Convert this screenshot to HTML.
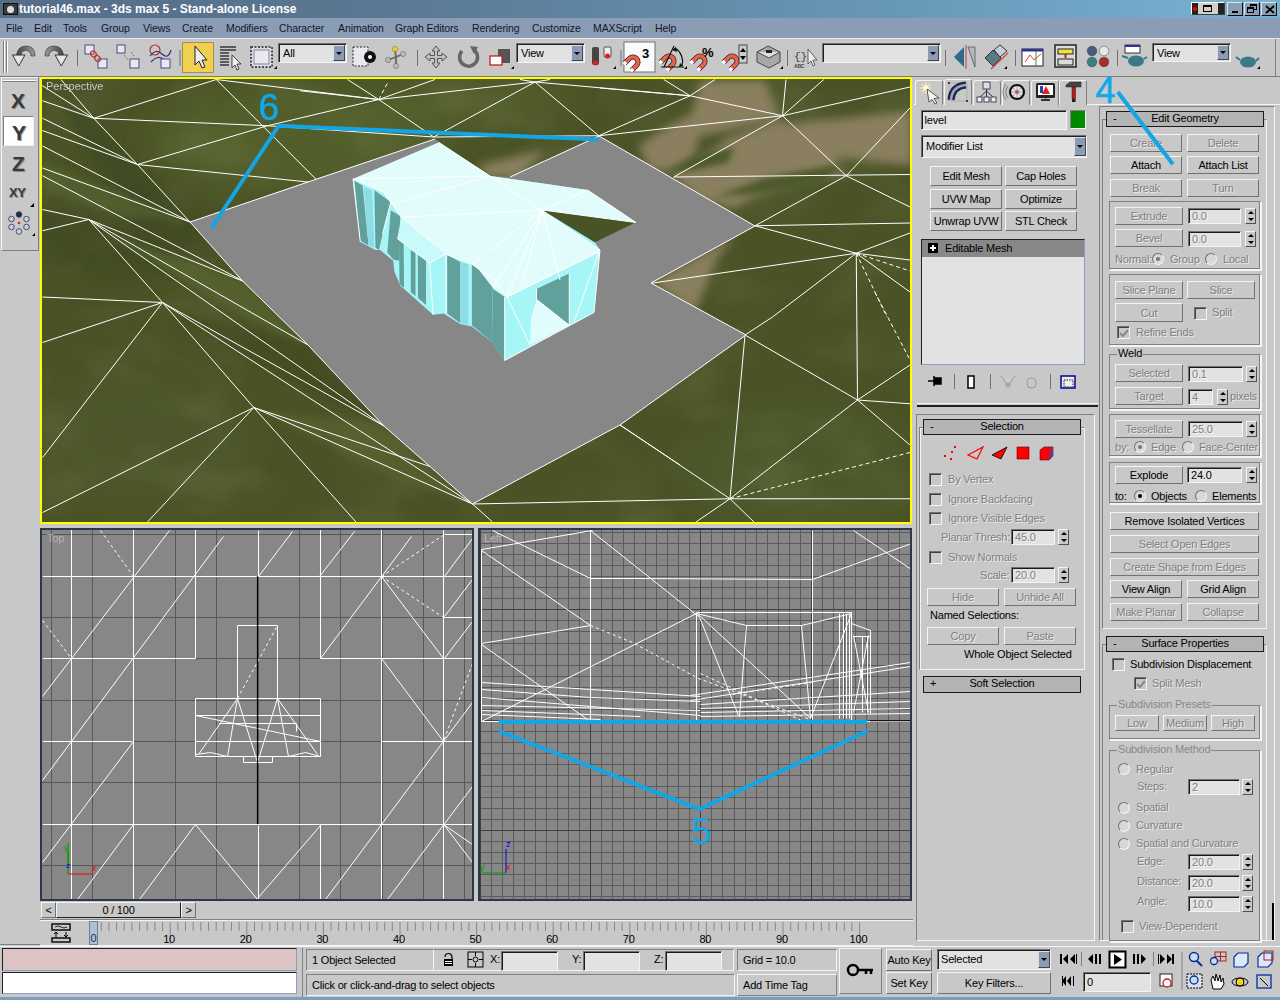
<!DOCTYPE html><html><head><meta charset="utf-8"><style>

*{margin:0;padding:0;box-sizing:border-box}
html,body{width:1280px;height:1000px;overflow:hidden;background:#c8c8c8;font-family:"Liberation Sans",sans-serif;font-size:11px;letter-spacing:-0.2px;color:#000}
.a{position:absolute}
.t{position:absolute;white-space:nowrap;line-height:13px}
.btn{position:absolute;background:#c8c8c8;border:1px solid;border-color:#f4f4f4 #707070 #707070 #f4f4f4;text-align:center;white-space:nowrap;color:#000;display:flex;align-items:center;justify-content:center;line-height:12px}
.dis{color:#808080;text-shadow:1px 1px 0 #ececec}
.fld{position:absolute;background:#e2e2e2;border:1px solid;border-color:#707070 #f4f4f4 #f4f4f4 #707070;box-shadow:inset 1px 1px 0 #1a1a1a;white-space:nowrap;line-height:13px;padding-left:3px;color:#000}
.fld.d{color:#808080;text-shadow:1px 1px 0 #f4f4f4}
.roll{position:absolute;background:#b4b4b4;border:1px solid #1a1a1a;text-align:center;line-height:13px;white-space:nowrap}
.roll b{position:absolute;left:6px;top:0;font-weight:normal}
.grp{position:absolute;border:1px solid;border-color:#808080 #f4f4f4 #f4f4f4 #808080;box-shadow:inset -1px -1px 0 #808080, 1px 1px 0 #f4f4f4}
.cb{position:absolute;width:13px;height:13px;background:#c8c8c8;border:1px solid;border-color:#707070 #f4f4f4 #f4f4f4 #707070;box-shadow:inset 1px 1px 0 #404040}
.rb{position:absolute;width:12px;height:12px;border-radius:50%;background:#d8d8d8;border:1px solid;border-color:#707070 #f4f4f4 #f4f4f4 #707070}
.spn{position:absolute;width:11px;background:#c8c8c8;border:1px solid;border-color:#f4f4f4 #505050 #505050 #f4f4f4}
.spn:before{content:"";position:absolute;left:2px;top:2px;border:3px solid transparent;border-bottom:3px solid #000;border-top:0}
.spn:after{content:"";position:absolute;left:2px;bottom:2px;border:3px solid transparent;border-top:3px solid #000;border-bottom:0}
.sep{position:absolute;width:2px;border-left:1px solid #808080;border-right:1px solid #f4f4f4}

</style></head><body>
<div class="a" style="left:0;top:0;width:1280px;height:18px;background:linear-gradient(90deg,#566d88 0%,#5a7893 30%,#6898b8 70%,#7ab2d2 100%)"></div>
<div class="a" style="left:3px;top:3px;width:15px;height:12px;background:#3a3a3a;border:1px solid #111"><div class="a" style="left:3px;top:2px;width:7px;height:7px;border-radius:50%;background:#ddd"></div></div>
<div class="t" style="left:19px;top:2px;color:#fff;font-weight:bold;font-size:12px;letter-spacing:0;line-height:15px">tutorial46.max - 3ds max 5 - Stand-alone License</div>
<div class="a" style="left:1191px;top:2px;width:34px;height:13px;background:#d4d0c8;border:1px solid;border-color:#fff #404040 #404040 #fff"><div class="a" style="left:0;top:0;width:6px;height:11px;background:#222"></div><div class="a" style="left:1px;top:4px;width:4px;height:4px;background:#f00;border-radius:50%"></div><div class="a" style="left:26px;top:0;width:6px;height:11px;background:#222"></div><div class="a" style="left:11px;top:2px;width:9px;height:7px;border:1px solid #000;border-top-width:2px"></div></div>
<div class="a" style="left:1227px;top:2px;width:16px;height:14px;background:#8a9fb6;border:1px solid;border-color:#dfe6ee #101010 #101010 #dfe6ee"><div class="a" style="left:4px;top:8px;width:6px;height:2px;background:#000"></div></div>
<div class="a" style="left:1244px;top:2px;width:16px;height:14px;background:#8a9fb6;border:1px solid;border-color:#dfe6ee #101010 #101010 #dfe6ee"><div class="a" style="left:5px;top:1px;width:7px;height:6px;border:1px solid #000;border-top-width:2px"></div><div class="a" style="left:2px;top:4px;width:7px;height:6px;border:1px solid #000;border-top-width:2px;background:#8a9fb6"></div></div>
<div class="a" style="left:1261px;top:2px;width:16px;height:14px;background:#8a9fb6;border:1px solid;border-color:#dfe6ee #101010 #101010 #dfe6ee"><svg class="a" style="left:3px;top:2px" width="10" height="9"><path d="M1,1 L9,8 M9,1 L1,8" stroke="#000" stroke-width="1.8"/></svg></div>
<div class="a" style="left:0;top:18px;width:1280px;height:20px;background:#8a9db5"></div>
<div class="a" style="left:0;top:38px;width:1280px;height:1px;background:#e6e6e6"></div>
<div class="t" style="left:6px;top:22px;color:#14142e;font-size:10.5px;letter-spacing:-0.1px">File</div>
<div class="t" style="left:34px;top:22px;color:#14142e;font-size:10.5px;letter-spacing:-0.1px">Edit</div>
<div class="t" style="left:63px;top:22px;color:#14142e;font-size:10.5px;letter-spacing:-0.1px">Tools</div>
<div class="t" style="left:101px;top:22px;color:#14142e;font-size:10.5px;letter-spacing:-0.1px">Group</div>
<div class="t" style="left:143px;top:22px;color:#14142e;font-size:10.5px;letter-spacing:-0.1px">Views</div>
<div class="t" style="left:182px;top:22px;color:#14142e;font-size:10.5px;letter-spacing:-0.1px">Create</div>
<div class="t" style="left:226px;top:22px;color:#14142e;font-size:10.5px;letter-spacing:-0.1px">Modifiers</div>
<div class="t" style="left:279px;top:22px;color:#14142e;font-size:10.5px;letter-spacing:-0.1px">Character</div>
<div class="t" style="left:338px;top:22px;color:#14142e;font-size:10.5px;letter-spacing:-0.1px">Animation</div>
<div class="t" style="left:395px;top:22px;color:#14142e;font-size:10.5px;letter-spacing:-0.1px">Graph Editors</div>
<div class="t" style="left:472px;top:22px;color:#14142e;font-size:10.5px;letter-spacing:-0.1px">Rendering</div>
<div class="t" style="left:532px;top:22px;color:#14142e;font-size:10.5px;letter-spacing:-0.1px">Customize</div>
<div class="t" style="left:593px;top:22px;color:#14142e;font-size:10.5px;letter-spacing:-0.1px">MAXScript</div>
<div class="t" style="left:655px;top:22px;color:#14142e;font-size:10.5px;letter-spacing:-0.1px">Help</div>
<div class="a" style="left:0;top:39px;width:1276px;height:38px;background:#c8c8c8;border-right:1px solid #808080;border-bottom:1px solid #808080"></div>
<div class="a" style="left:0;top:76px;width:1280px;height:1px;background:#7a7a7a"></div>
<div class="a" style="left:3px;top:41px;width:2px;height:32px;border-left:1px solid #808080;border-right:1px solid #fff"></div>
<div class="a" style="left:6px;top:41px;width:2px;height:32px;border-left:1px solid #808080;border-right:1px solid #fff"></div>
<svg class="a" style="left:0;top:38px" width="1280" height="39" viewBox="0 38 1280 39">
<defs>
<linearGradient id="gm" x1="0" y1="0" x2="0" y2="1"><stop offset="0" stop-color="#f4f4f4"/><stop offset="1" stop-color="#707070"/></linearGradient>
<radialGradient id="sph" cx="0.35" cy="0.35" r="0.7"><stop offset="0" stop-color="#fff"/><stop offset="1" stop-color="#555"/></radialGradient>
</defs>
<linearGradient id="ug" x1="0" y1="0" x2="1" y2="0"><stop offset="0" stop-color="#444"/><stop offset="1" stop-color="#9a9a9a"/></linearGradient><path d="M35,56 L31,56 Q30.5,50.5 26,50.5 Q21.5,50.5 21,55 L16.5,55 Q18,46 26,46 Q35,46 35,56 Z" fill="url(#ug)" stroke="#333" stroke-width="0.6"/><path d="M12.5,55 L25,55 L18.7,66 Z" fill="#e6e6e6" stroke="#333" stroke-width="1"/>
<linearGradient id="rg" x1="1" y1="0" x2="0" y2="0"><stop offset="0" stop-color="#444"/><stop offset="1" stop-color="#9a9a9a"/></linearGradient><path d="M45,56 L49,56 Q49.5,50.5 54,50.5 Q58.5,50.5 59,55 L63.5,55 Q62,46 54,46 Q45,46 45,56 Z" fill="url(#rg)" stroke="#333" stroke-width="0.6"/><path d="M67.5,55 L55,55 L61.3,66 Z" fill="#e6e6e6" stroke="#333" stroke-width="1"/>
<line x1="77.5" y1="50" x2="77.5" y2="66" stroke="#707070"/>
<rect x="85" y="45" width="9" height="9" fill="#e8e8f4" stroke="#4a4a80"/><rect x="98" y="59" width="9" height="9" fill="#e8e8f4" stroke="#4a4a80"/><ellipse cx="93.5" cy="54" rx="2.6" ry="3.2" transform="rotate(-40 93.5 54)" fill="none" stroke="#c03030" stroke-width="1.3"/><ellipse cx="97.5" cy="58.5" rx="2.6" ry="3.2" transform="rotate(-40 97.5 58.5)" fill="none" stroke="#c03030" stroke-width="1.3"/>
<rect x="117" y="45" width="8" height="8" fill="#e8e8f4" stroke="#4a4a80"/><rect x="130" y="59" width="9" height="9" fill="#e8e8f4" stroke="#4a4a80"/><path d="M124,55 L128,60 M131,52 L134,56" stroke="#c03030" stroke-width="1" stroke-dasharray="1,1"/>
<circle cx="155" cy="50" r="5" fill="none" stroke="#c03030" stroke-width="1.2"/><path d="M150,56 Q156,48 162,54 T171,50 M151,62 Q158,54 164,60" stroke="#303070" stroke-width="1.2" fill="none"/><rect x="161" y="59" width="9" height="9" fill="#e8e8f4" stroke="#4a4a80"/>
<line x1="180" y1="50" x2="180" y2="66" stroke="#707070"/>
<rect x="182.5" y="42.5" width="31" height="30" fill="#f0d050" stroke="#a89040" stroke-width="1"/>
<path d="M195,46 L195,65 L199,61 L202,68 L205,67 L202,60 L207,60 Z" fill="#eee" stroke="#222" stroke-width="1"/>
<g stroke="#111" stroke-width="1.2"><line x1="220" y1="47" x2="236" y2="47"/><line x1="220" y1="50" x2="236" y2="50"/><line x1="220" y1="53" x2="229" y2="53"/><line x1="220" y1="56" x2="229" y2="56"/><line x1="220" y1="59" x2="229" y2="59"/><line x1="220" y1="62" x2="229" y2="62"/><line x1="220" y1="65" x2="229" y2="65"/></g>
<path d="M232,55 L232,68 L235,65 L237,70 L239,69 L237,64 L241,64 Z" fill="#eee" stroke="#222" stroke-width="0.8"/>
<rect x="251" y="47" width="21" height="20" fill="#dcdcec" stroke="#222" stroke-width="1.5" stroke-dasharray="2,1.5"/><rect x="254" y="50" width="15" height="14" fill="#e8e8f0" stroke="#888"/>
<rect x="353" y="47" width="15" height="19" fill="#e8e8f0" stroke="#222" stroke-dasharray="2,1.5"/><circle cx="370" cy="57" r="6" fill="#111"/><circle cx="370" cy="57" r="2" fill="#fff"/>
<g stroke="#666" stroke-width="1.8"><line x1="396" y1="57" x2="395" y2="50"/><line x1="396" y1="57" x2="388" y2="60"/><line x1="396" y1="57" x2="403" y2="54"/><line x1="396" y1="57" x2="396" y2="65"/></g><circle cx="395" cy="49" r="2.6" fill="#f0d030" stroke="#806010" stroke-width="0.5"/><circle cx="388" cy="60" r="2.6" fill="#bbb" stroke="#555" stroke-width="0.5"/><circle cx="403" cy="54" r="2.6" fill="#bbb" stroke="#555" stroke-width="0.5"/><circle cx="396" cy="66" r="2.6" fill="#bbb" stroke="#555" stroke-width="0.5"/>
<line x1="417.5" y1="50" x2="417.5" y2="66" stroke="#707070"/>
<path d="M436,46 L440,51 L437.5,51 L437.5,55.5 L442,55.5 L442,53 L447,57 L442,61 L442,58.5 L437.5,58.5 L437.5,63 L440,63 L436,68 L432,63 L434.5,63 L434.5,58.5 L430,58.5 L430,61 L425,57 L430,53 L430,55.5 L434.5,55.5 L434.5,51 L432,51 Z" fill="#c0c0c0" stroke="#555" stroke-width="1"/>
<path d="M462,51 A9,9 0 1 0 474,50" fill="none" stroke="#666" stroke-width="3.5"/><path d="M470,46 L478,47 L474,54 Z" fill="#666"/>
<rect x="498" y="49" width="12" height="14" fill="#555"/><rect x="490" y="56" width="12" height="9" fill="#fff" stroke="#c02020" stroke-width="1.3"/>
<rect x="592" y="47" width="7" height="18" fill="#444" rx="2"/><rect x="604" y="47" width="7" height="10" fill="#eee" stroke="#555" rx="1"/><circle cx="595.5" cy="63" r="2.5" fill="#e02020"/><circle cx="607.5" cy="56" r="2.5" fill="#e02020"/>
<line x1="621" y1="50" x2="621" y2="66" stroke="#707070"/>
<rect x="624" y="42" width="31" height="30" fill="#fafafa" stroke="#707070"/>
<g transform="translate(633,62) rotate(45)"><path d="M-5,7 L-5,0 A5,5 0 0 1 5,0 L5,7" fill="none" stroke="#303030" stroke-width="5.2"/><path d="M-5,7 L-5,0 A5,5 0 0 1 5,0 L5,7" fill="none" stroke="#f06048" stroke-width="3.6"/><path d="M-5,5 L-5,8 M5,5 L5,8" stroke="#fff" stroke-width="3.6"/></g><text x="642" y="58" font-size="13" font-weight="bold" font-family="Liberation Sans" fill="#000">3</text>
<g transform="translate(669,61) rotate(45)"><path d="M-5,7 L-5,0 A5,5 0 0 1 5,0 L5,7" fill="none" stroke="#303030" stroke-width="5.2"/><path d="M-5,7 L-5,0 A5,5 0 0 1 5,0 L5,7" fill="none" stroke="#f06048" stroke-width="3.6"/><path d="M-5,5 L-5,8 M5,5 L5,8" stroke="#fff" stroke-width="3.6"/></g><g transform="translate(700,61) rotate(45)"><path d="M-5,7 L-5,0 A5,5 0 0 1 5,0 L5,7" fill="none" stroke="#303030" stroke-width="5.2"/><path d="M-5,7 L-5,0 A5,5 0 0 1 5,0 L5,7" fill="none" stroke="#f06048" stroke-width="3.6"/><path d="M-5,5 L-5,8 M5,5 L5,8" stroke="#fff" stroke-width="3.6"/></g><g transform="translate(732,61) rotate(45)"><path d="M-5,7 L-5,0 A5,5 0 0 1 5,0 L5,7" fill="none" stroke="#303030" stroke-width="5.2"/><path d="M-5,7 L-5,0 A5,5 0 0 1 5,0 L5,7" fill="none" stroke="#f06048" stroke-width="3.6"/><path d="M-5,5 L-5,8 M5,5 L5,8" stroke="#fff" stroke-width="3.6"/></g>
<path d="M661,67 L684,67 M664,67 L674,46 M675,48 A16,16 0 0 1 682,66" fill="none" stroke="#111" stroke-width="1.2"/><path d="M672,50 L676,47 L677,52 Z M680,63 L683,66 L679,67 Z" fill="#111"/>
<text x="702" y="57" font-size="13" font-weight="bold" font-family="Liberation Sans" fill="#000">%</text>
<rect x="739" y="45" width="8" height="18" fill="#ccc" stroke="#444"/><path d="M740,52 L743,48 L746,52 Z M740,56 L743,60 L746,56 Z" fill="#000"/>
<path d="M757,52 L768,46 L780,52 L780,62 L769,68 L757,62 Z" fill="#a8a8a8" stroke="#444"/><path d="M757,52 L769,58 L780,52" fill="#ddd" stroke="#444"/><rect x="766" y="50" width="6" height="3" fill="#222"/>
<line x1="787.5" y1="50" x2="787.5" y2="66" stroke="#707070"/>
<text x="794" y="60" font-size="11" font-family="Liberation Mono" fill="#444">{}</text><text x="794" y="68" font-size="5" font-weight="bold" font-family="Liberation Sans" fill="#444">ABC</text><path d="M808,49 L808,64 L811,61 L813,66 L815,65 L813,60 L817,60 Z" fill="#eee" stroke="#444" stroke-width="0.8"/>
<line x1="945.5" y1="50" x2="945.5" y2="66" stroke="#707070"/>
<path d="M964,47 L954,57 L964,67 Z" fill="#2e6a8a"/><line x1="966" y1="45" x2="966" y2="69" stroke="#c04040" stroke-width="1"/><path d="M968,47 L975,67 L975,47 Z" fill="#b8b8c0" stroke="#555" stroke-width="0.8"/>
<path d="M985,58 L993,50 L1001,58 L993,66 Z" fill="#5a7a88" stroke="#333"/><path d="M994,50 L1000,45 L1007,51 L1000,57 Z" fill="#c8d0e0" stroke="#333"/><line x1="991" y1="69" x2="1008" y2="53" stroke="#e04040" stroke-width="1.2"/>
<line x1="1015.5" y1="50" x2="1015.5" y2="66" stroke="#707070"/>
<rect x="1022" y="49" width="21" height="17" fill="#fff" stroke="#222"/><rect x="1022" y="49" width="21" height="2.5" fill="#3030a0"/><path d="M1025,62 L1030,55 L1034,60 L1041,54" stroke="#e04040" fill="none"/><line x1="1036" y1="51" x2="1036" y2="66" stroke="#30a030"/>
<rect x="1055" y="45" width="21" height="22" fill="#ddd" stroke="#222" stroke-width="1.5"/><rect x="1058" y="49" width="15" height="5" fill="#f0e040" stroke="#222"/><rect x="1058" y="59" width="15" height="6" fill="#ddd" stroke="#222"/><path d="M1065.5,54 L1065.5,58" stroke="#c02020" stroke-width="2"/>
<circle cx="1092" cy="51" r="4.8" fill="#4a5a80" stroke="#222" stroke-width="0.4"/>
<circle cx="1104" cy="51" r="4.8" fill="#e8e8e8" stroke="#222" stroke-width="0.4"/>
<circle cx="1092" cy="62" r="4.8" fill="#3a8080" stroke="#222" stroke-width="0.4"/>
<circle cx="1104" cy="62" r="4.8" fill="#a03030" stroke="#222" stroke-width="0.4"/>
<line x1="1117.5" y1="50" x2="1117.5" y2="66" stroke="#707070"/>
<rect x="1125" y="45" width="15" height="8" fill="#fff" stroke="#333"/><rect x="1125" y="45" width="15" height="2" fill="#3030a0"/><ellipse cx="1136" cy="61" rx="8" ry="5.5" fill="#3a7a88"/><path d="M1128,58 L1122,56 M1144,59 L1147,57" stroke="#3a7a88" stroke-width="2"/>
<ellipse cx="1248" cy="62" rx="8" ry="5.5" fill="#3a7a88"/><path d="M1240,60 L1236,57 M1256,61 L1259,58" stroke="#3a7a88" stroke-width="2"/>
<path d="M511,69 L514,66 L514,69 Z" fill="#000"/><path d="M613,69 L616,66 L616,69 Z" fill="#000"/><path d="M684,69 L687,66 L687,69 Z" fill="#000"/><path d="M780,69 L783,66 L783,69 Z" fill="#000"/><path d="M1004,69 L1007,66 L1007,69 Z" fill="#000"/><path d="M1257,69 L1260,66 L1260,69 Z" fill="#000"/><path d="M274,69 L277,66 L277,69 Z" fill="#000"/>
</svg>
<div class="a" style="left:278px;top:43px;width:69px;height:20px;background:#e2e2e2;border:1px solid;border-color:#707070 #f4f4f4 #f4f4f4 #707070;box-shadow:inset 1px 1px 0 #202020"><div class="t" style="left:4px;top:3px">All</div><div class="a" style="right:1px;top:1px;width:12px;height:16px;background:#8a9cb4;border:1px solid;border-color:#dde #445 #445 #dde"><div class="a" style="left:2px;top:6px;border:3px solid transparent;border-top:3px solid #000;border-bottom:0"></div></div></div>
<div class="a" style="left:516px;top:43px;width:69px;height:20px;background:#e2e2e2;border:1px solid;border-color:#707070 #f4f4f4 #f4f4f4 #707070;box-shadow:inset 1px 1px 0 #202020"><div class="t" style="left:4px;top:3px">View</div><div class="a" style="right:1px;top:1px;width:12px;height:16px;background:#8a9cb4;border:1px solid;border-color:#dde #445 #445 #dde"><div class="a" style="left:2px;top:6px;border:3px solid transparent;border-top:3px solid #000;border-bottom:0"></div></div></div>
<div class="a" style="left:822px;top:43px;width:119px;height:20px;background:#e2e2e2;border:1px solid;border-color:#707070 #f4f4f4 #f4f4f4 #707070;box-shadow:inset 1px 1px 0 #202020"><div class="t" style="left:4px;top:3px"></div><div class="a" style="right:1px;top:1px;width:12px;height:16px;background:#8a9cb4;border:1px solid;border-color:#dde #445 #445 #dde"><div class="a" style="left:2px;top:6px;border:3px solid transparent;border-top:3px solid #000;border-bottom:0"></div></div></div>
<div class="a" style="left:1152px;top:43px;width:79px;height:19px;background:#e2e2e2;border:1px solid;border-color:#707070 #f4f4f4 #f4f4f4 #707070;box-shadow:inset 1px 1px 0 #202020"><div class="t" style="left:4px;top:3px">View</div><div class="a" style="right:1px;top:1px;width:12px;height:15px;background:#8a9cb4;border:1px solid;border-color:#dde #445 #445 #dde"><div class="a" style="left:2px;top:5px;border:3px solid transparent;border-top:3px solid #000;border-bottom:0"></div></div></div>
<div class="a" style="left:1px;top:77px;width:38px;height:174px;border:1px solid;border-color:#f4f4f4 #808080 #808080 #f4f4f4"></div>
<div class="a" style="left:3px;top:80px;width:33px;height:2px;border-top:1px solid #fff;border-bottom:1px solid #808080"></div>
<div class="a" style="left:3px;top:116px;width:31px;height:30px;background:#fdfdfd;border:1px solid;border-color:#808080 #f0f0f0 #f0f0f0 #808080"></div>
<div class="t" style="left:11px;top:90px;font-weight:bold;font-size:21px;line-height:21px;color:#3a3a3a;letter-spacing:0;text-shadow:1px 1px 0 #888">X</div>
<div class="t" style="left:12px;top:122px;font-weight:bold;font-size:21px;line-height:21px;color:#3a3a3a;letter-spacing:0;text-shadow:1px 1px 0 #888">Y</div>
<div class="t" style="left:12px;top:153px;font-weight:bold;font-size:21px;line-height:21px;color:#3a3a3a;letter-spacing:0;text-shadow:1px 1px 0 #888">Z</div>
<div class="t" style="left:9px;top:186px;font-weight:bold;font-size:13px;line-height:13px;color:#3a3a3a;letter-spacing:-0.5px;text-shadow:1px 1px 0 #888">XY</div>
<svg class="a" style="left:7px;top:211px" width="30" height="30"><g stroke="#334" stroke-width="0.8"><circle cx="12" cy="3.5" r="2.8" fill="#1a3040"/><circle cx="4.5" cy="8" r="2.8" fill="#c0d0e8"/><circle cx="19.5" cy="8" r="2.8" fill="#c0d0e8"/><circle cx="4.5" cy="16" r="2.8" fill="#c0d0e8"/><circle cx="19.5" cy="16" r="2.8" fill="#c0d0e8"/><circle cx="12" cy="20.5" r="2.8" fill="#c0d0e8"/></g><circle cx="12" cy="12" r="1.3" fill="#e02020"/><path d="M25,25 L28,22 L28,25 Z" fill="#000"/></svg>
<svg class="a" style="left:30px;top:203px" width="5" height="5"><path d="M0,4 L4,0 L4,4 Z" fill="#000"/></svg>
<svg class="a" style="left:40px;top:77px" width="872" height="447" viewBox="40 77 872 447">
<defs>
<filter id="blur6" x="-20%" y="-20%" width="140%" height="140%"><feGaussianBlur stdDeviation="7"/></filter>
<filter id="blur3" x="-20%" y="-20%" width="140%" height="140%"><feGaussianBlur stdDeviation="3"/></filter>
<filter id="blur12" x="-30%" y="-30%" width="160%" height="160%"><feGaussianBlur stdDeviation="14"/></filter>
<filter id="mottleL" x="0" y="0" width="100%" height="100%"><feTurbulence type="fractalNoise" baseFrequency="0.008 0.016" numOctaves="2" seed="7"/><feColorMatrix type="matrix" values="0 0 0 0 0.35  0 0 0 0 0.39  0 0 0 0 0.19  1.6 0 0 0 -0.72"/><feGaussianBlur stdDeviation="3"/></filter>
<filter id="mottleD" x="0" y="0" width="100%" height="100%"><feTurbulence type="fractalNoise" baseFrequency="0.012 0.022" numOctaves="3" seed="19"/><feColorMatrix type="matrix" values="0 0 0 0 0.24  0 0 0 0 0.27  0 0 0 0 0.12  1.6 0 0 0 -0.75"/><feGaussianBlur stdDeviation="3"/></filter>
<filter id="blur5" x="-20%" y="-20%" width="140%" height="140%"><feGaussianBlur stdDeviation="5"/></filter>
</defs>
<rect x="40" y="77" width="872" height="447" fill="#4a5326"/>
<g filter="url(#blur12)">
<ellipse cx="150" cy="440" rx="100" ry="60" fill="#4d5729"/>
<ellipse cx="300" cy="140" rx="150" ry="50" fill="#535e2c"/><ellipse cx="480" cy="100" rx="90" ry="25" fill="#525d2c"/>
<ellipse cx="800" cy="470" rx="110" ry="60" fill="#4d5829"/>
<ellipse cx="120" cy="230" rx="90" ry="50" fill="#434c22"/>
</g>
<rect x="40" y="77" width="872" height="447" filter="url(#mottleD)" opacity="0.35"/>
<g filter="url(#blur5)" fill="#8a7f5e">
<polygon points="700.7,80 765,80 771,95.4 780.3,116.8 734.4,129 691.5,138.3 654.8,150.5 636.4,147.4 657.8,132.1 691.5,113.8"/>
<polygon points="673,178 728,138 780,120 826,138 844.6,175 795.7,181 749.7,199.5 734.4,208.7 700,200"/>
<polygon points="795.7,123 912,110.7 912,165.8 857,159.7 820,156.6 801.8,144.4"/>
<polygon points="651.7,282 734.4,236 716,260.8 703.8,291.4 694.6,312.8 673,297.5"/>
<polygon points="640,150 700,135 690,175 650,170"/>
<polygon points="478,165 545,150 520,178 488,178"/>
</g>
<g filter="url(#blur3)" fill="#4e5829">
<polygon points="664,172 691.5,156.6 734.4,147.4 728,162.8 685.4,172"/>
<polygon points="716,196.5 765,178 844.6,162.8 826,181 765,193.4"/>
</g>
<g filter="url(#blur3)">
<polygon points="60,100 93,118 190,222 150,210 90,160" fill="#3f4821" opacity="0.7"/>
<polygon points="100,230 243,281.5 308,345 250,320 150,260" fill="#5c6833" opacity="0.6"/>
<polygon points="170,310 308,345 384,426 330,400 230,350" fill="#404a22" opacity="0.6"/>
<polygon points="260,410 384,426 472.5,504 400,480" fill="#5a6632" opacity="0.6"/>
<polygon points="42,160 190,222 120,215 42,190" fill="#5a6632" opacity="0.5"/>
</g>
<g fill="none" stroke="#ffffff" stroke-width="1"><polyline points="61,79.5 93.75,118.25 137.5,164.5 190,222" /><polyline points="42.5,100.75 93.75,118.25" /><polyline points="42.3,130.5 137.5,164.5" /><polyline points="42.3,85.7 93.75,118.25" /><polyline points="93.75,118.25 216.25,79.5" /><polyline points="93.75,118.25 267.5,125.75" /><polyline points="42.5,118.25 137.5,164.5" /><polyline points="42.5,146 190,222" /><polyline points="42.5,168 190,222" /><polyline points="42.5,175.75 245,282" /><polyline points="42.5,209.5 88.75,219.5" /><polyline points="42.5,230.75 88.75,219.5" /><polyline points="137.5,164.5 267.5,125.75" /><polyline points="137.5,164.5 320,183.25" /><polyline points="216.25,79.5 320,183.25" /><polyline points="267.5,125.75 378.75,99.5" /><polyline points="216.25,79.5 378.75,99.5" /><polyline points="88.75,219.5 245,282" /><polyline points="88.75,219.5 162.5,302.5" /><polyline points="42.5,297 162.5,302.5" /><polyline points="42.5,342.5 162.5,302.5" /><polyline points="42.5,457.5 162.5,302.5" /><polyline points="162.5,302.5 253.75,407.5" /><polyline points="253.75,407.5 42.5,512.5" /><polyline points="253.75,407.5 147.5,522" /><polyline points="253.75,407.5 356,522" /><polyline points="88.75,219.5 308,345" /><polyline points="88.75,219.5 384,426" /><polyline points="162.5,302.5 384,426" /><polyline points="162.5,302.5 472.5,504" /><polyline points="253.75,407.5 472.5,504" /><polyline points="253.75,407.5 430,466.5" /><polyline points="472.5,504 492.5,522" /><polyline points="472.5,504 730,498.75" /><polyline points="378.75,99.5 433.75,137" /><polyline points="378.75,99.5 535,82" /><polyline points="378.75,99.5 435,79.5" /><polyline points="347.5,79.5 378.75,99.5" /><polyline points="300,90.75 378.75,99.5" /><polyline points="267.5,125.75 433.75,137" /><polyline points="535,82 598.75,135.75" /><polyline points="535,82 433.75,137" /><polyline points="535,82 690,95.75" /><polyline points="520,79.5 535,82 550,79.5" /><polyline points="433.75,137 598.75,135.75" /><polyline points="600,88 690,95.75" /><polyline points="663.75,79.5 690,95.75" /><polyline points="715,79.5 690,95.75" /><polyline points="690,95.75 598.75,135.75" /><polyline points="690,95.75 782.5,115.75" /><polyline points="598.75,135.75 782.5,115.75" /><polyline points="782.5,115.75 786,79.5" /><polyline points="782.5,115.75 823.75,79.5" /><polyline points="782.5,115.75 910,87" /><polyline points="782.5,115.75 673.75,177" /><polyline points="782.5,115.75 846.25,175.75" /><polyline points="673.75,177 910,174.5" /><polyline points="846.25,175.75 910,108" /><polyline points="846.25,175.75 910,207" /><polyline points="846.25,175.75 755,225.75" /><polyline points="755,225.75 910,223" /><polyline points="755,225.75 856.25,253.25" /><polyline points="651.25,283.25 856.25,253.25" /><polyline points="856.25,253.25 910,233" /><polyline points="856.25,253.25 910,260" /><polyline points="856.25,253.25 910,292" /><polyline points="856.25,253.25 857.5,400" /><polyline points="856.25,253.25 772.5,317" /><polyline points="772.5,317 745,335" /><polyline points="745,335 857.5,400" /><polyline points="745,335 730,498.75" /><polyline points="857.5,400 910,365" /><polyline points="857.5,400 910,403.75" /><polyline points="857.5,400 910,445" /><polyline points="857.5,400 730,498.75" /><polyline points="620,425 730,498.75" /><polyline points="620,425 680,465" /><polyline points="730,498.75 910,498.75" /><polyline points="730,498.75 696,522" /><polyline points="730,498.75 754,522" /></g>
<g fill="none" stroke="#ffffff" stroke-width="1" stroke-dasharray="4,3"><polyline points="856.25,253.25 910,271" /><polyline points="856.25,253.25 887,317" /><polyline points="875,292.5 910,360" /><polyline points="730,498.75 910,452.5" /><polyline points="378.75,99.5 388,82" /></g>
<polygon points="190,222 435,139 490,176 510,177 599,136 755,226 651,283 746,335 620,425 472.5,504 384,426 308,345 243,281.5" fill="#878787"/>
<g fill="none" stroke="#ffffff" stroke-width="1"><polyline points="190,222 435,139"/><polyline points="510,177 599,136 755,226 651,283 746,335 620,425 472.5,504"/><polyline points="190,222 243,281.5 308,345 384,426 472.5,504"/></g>
<polygon points="353,179 438.75,142.5 490,176 587.5,190 636,222.5 595,242.5 600,250 594,312.4 504.7,360.5 491.8,341.7 471.9,326.5 460.1,324.1 443.7,313.5 433.1,314.7 400.2,285.4 394.3,271.3 393.2,260.7 380.2,250.1 375.5,250.1 360.3,241.9" fill="#a6f6f8"/>
<polygon points="354.4,180.8 362.6,185.5 368.5,245.4 360.3,240.7" fill="#62a09c"/>
<polygon points="374.4,190.2 390.8,202 382.6,233.7 379,250.1 375.5,247.8" fill="#62a09c"/>
<polygon points="390.8,210.2 400.2,216 399,260.7 393.2,259.5 387.3,252.5" fill="#62a09c"/>
<polygon points="399,240.7 403.7,243 404,287.7 399.5,284" fill="#62a09c"/>
<polygon points="410.8,250 415.5,253 415.5,296 410.8,292" fill="#62a09c"/>
<polygon points="417.8,254.8 426,260 426,305 418,298" fill="#62a09c"/>
<polygon points="447.2,254.8 460.1,261.9 460.1,322.9 447.2,313.5" fill="#62a09c"/>
<polygon points="471.9,264.2 493,278.3 491.8,341.7 471.9,325.3" fill="#62a09c"/>
<polygon points="493,288.9 504.7,297 504.7,360.5 491.8,341.7" fill="#62a09c"/>
<polygon points="536.5,288.9 569.3,273.6 569.3,325.3 536.5,299.4" fill="#62a09c"/>
<polygon points="363.8,186.7 372,190.2 374.4,247.8 368.5,245.4" fill="#8edce4"/>
<polygon points="460,262 468.3,264.2 468.3,325.3 460,323" fill="#8edce4"/>
<polygon points="536.5,299.4 569.3,325.3 530,345 531,318" fill="#e0fcfc"/>
<polygon points="401.4,217.2 446,253.6 429.6,263 397.2,238.4" fill="#c8fafa"/>
<polygon points="353,179 438.75,142.5 490,176 587.5,190 636,222.5 542.5,210 600,250 507,297 493,288 479,270 471.9,264.2 447.2,254.8 401.4,217.2 392,204 383,192" fill="#e2fcfc"/>
<polygon points="542.5,210 636,222.5 595,242.5" fill="#4a5326"/>
<g stroke="#ffffff" stroke-width="1" fill="none"><line x1="353" y1="179" x2="490" y2="176"/><line x1="392" y1="204" x2="490" y2="176"/><line x1="401.4" y1="217.2" x2="542.5" y2="210"/><line x1="471.9" y1="264.2" x2="542.5" y2="210"/><line x1="507" y1="297" x2="542.5" y2="210"/><line x1="493" y1="288" x2="542.5" y2="210"/><line x1="542.5" y1="210" x2="587.5" y2="190"/><line x1="490" y1="176" x2="600" y2="250"/><line x1="438.75" y1="142.5" x2="490" y2="176"/><line x1="353" y1="179" x2="383" y2="192"/><line x1="383" y1="192" x2="392" y2="204"/><line x1="392" y1="204" x2="401.4" y2="217.2"/><line x1="401.4" y1="217.2" x2="447.2" y2="254.8"/><line x1="447.2" y1="254.8" x2="471.9" y2="264.2"/><line x1="471.9" y1="264.2" x2="493" y2="278.3"/><line x1="493" y1="278.3" x2="507" y2="297"/><line x1="507" y1="297" x2="600" y2="250"/><line x1="600" y1="250" x2="594" y2="312.4"/><line x1="594" y1="312.4" x2="504.7" y2="360.5"/><line x1="504.7" y1="297" x2="504.7" y2="360.5"/><line x1="542.5" y1="210" x2="636" y2="222.5"/><line x1="587.5" y1="190" x2="636" y2="222.5"/><line x1="507" y1="297" x2="530" y2="345"/><line x1="569.3" y1="273.6" x2="569.3" y2="325.3"/><line x1="599" y1="252" x2="574" y2="322"/><line x1="353" y1="179" x2="360.3" y2="241.9"/><line x1="397.2" y1="238.4" x2="429.6" y2="263"/><line x1="429.6" y1="263" x2="446" y2="253.6"/><line x1="520" y1="292" x2="542.5" y2="210"/><line x1="560" y1="280" x2="542.5" y2="210"/><line x1="507" y1="297" x2="599" y2="252"/><line x1="536.5" y1="288.9" x2="536.5" y2="299.4"/><line x1="536.5" y1="299.4" x2="569.3" y2="325.3"/><line x1="429.6" y1="263" x2="433.1" y2="314.7"/><line x1="446" y1="254" x2="446" y2="313.5"/><line x1="382.6" y1="233.7" x2="390.8" y2="202"/></g>
<polyline points="211.25,228.25 278.75,125.75 598.75,139.5" fill="none" stroke="#14a5e6" stroke-width="4" stroke-linejoin="miter"/>
<text x="258.5" y="119.5" font-family="Liberation Sans" font-size="37" fill="#10a8ea" stroke="#10a8ea" stroke-width="0.5" letter-spacing="0">6</text>
<text x="46" y="90" font-family="Liberation Sans" font-size="11" fill="#c8c8c8" letter-spacing="0">Perspective</text>
<rect x="41" y="78" width="870" height="445" fill="none" stroke="#ffff00" stroke-width="2"/>
</svg>
<svg class="a" style="left:40px;top:528px" width="434" height="373" viewBox="40 528 434 373">
<rect x="40" y="528" width="434" height="373" fill="#878787"/>
<g stroke="#575757" stroke-width="1"><line x1="51.5" y1="528" x2="51.5" y2="901"/><line x1="92.5" y1="528" x2="92.5" y2="901"/><line x1="133.5" y1="528" x2="133.5" y2="901"/><line x1="175.5" y1="528" x2="175.5" y2="901"/><line x1="216.5" y1="528" x2="216.5" y2="901"/><line x1="258.5" y1="528" x2="258.5" y2="901"/><line x1="299.5" y1="528" x2="299.5" y2="901"/><line x1="340.5" y1="528" x2="340.5" y2="901"/><line x1="382.5" y1="528" x2="382.5" y2="901"/><line x1="423.5" y1="528" x2="423.5" y2="901"/><line x1="464.5" y1="528" x2="464.5" y2="901"/><line x1="40" y1="534.5" x2="474" y2="534.5"/><line x1="40" y1="576.5" x2="474" y2="576.5"/><line x1="40" y1="617.5" x2="474" y2="617.5"/><line x1="40" y1="658.5" x2="474" y2="658.5"/><line x1="40" y1="700.5" x2="474" y2="700.5"/><line x1="40" y1="741.5" x2="474" y2="741.5"/><line x1="40" y1="782.5" x2="474" y2="782.5"/><line x1="40" y1="824.5" x2="474" y2="824.5"/><line x1="40" y1="865.5" x2="474" y2="865.5"/></g>
<g stroke="#ffffff" stroke-width="1" fill="none"><polyline points="42.5,576.5 472.5,576.5"/><polyline points="42.5,658.5 195.5,658.5"/><polyline points="320.5,658.5 472.5,658.5"/><polyline points="42.5,741.5 132.5,741.5"/><polyline points="381.5,741.5 472.5,741.5"/><polyline points="42.5,824.5 472.5,824.5"/><polyline points="71.5,528.5 71.5,899.5"/><polyline points="133.5,528.5 133.5,899.5"/><polyline points="195.5,528.5 195.5,658.5"/><polyline points="320.5,528.5 320.5,658.5"/><polyline points="320.5,824.5 320.5,899.5"/><polyline points="381.5,528.5 381.5,899.5"/><polyline points="443.5,528.5 443.5,899.5"/><polyline points="42.5,696.5 169.5,530.5"/><polyline points="42.5,780.5 223.5,536.5"/><polyline points="42.5,862.5 133.5,741.5"/><polyline points="77.5,899.5 133.5,824.5"/><polyline points="139.5,899.5 195.5,824.5"/><polyline points="320.5,658.5 411.5,536.5"/><polyline points="444.5,658.5 472.5,621.5"/><polyline points="381.5,824.5 472.5,702.5"/><polyline points="325.5,899.5 381.5,824.5"/><polyline points="387.5,899.5 472.5,786.5"/><polyline points="381.5,658.5 443.5,741.5"/><polyline points="381.5,576.5 443.5,658.5"/><polyline points="195.5,824.5 257.5,899.5"/><polyline points="443.5,824.5 472.5,844.5"/><polyline points="444.5,534.5 472.5,534.5"/><polyline points="444.5,576.5 472.5,538.5"/><polyline points="444.5,616.5 472.5,579.5"/><polyline points="258.5,530.5 258.5,576.5"/><polyline points="258.5,825.5 258.5,901.5"/><polyline points="257.5,898.5 320.5,825.5"/><polyline points="444.5,825.5 472.5,862.5"/><polyline points="258.5,576.5 292.5,531.5"/><polyline points="319.5,576.5 354.5,531.5"/><polyline points="443.5,617.5 472.5,617.5"/><polyline points="237.5,625.5 277.5,625.5 277.5,698.5 237.5,698.5 237.5,625.5"/><polyline points="195.5,698.5 320.5,698.5 320.5,756.5 195.5,756.5 195.5,698.5"/><polyline points="195.5,715.5 320.5,741.5"/><polyline points="195.5,715.5 320.5,715.5"/><polyline points="195.5,741.5 320.5,741.5"/><polyline points="219.5,723.5 296.5,723.5 296.5,731.5"/><polyline points="237.5,698.5 198.5,754.5"/><polyline points="237.5,698.5 227.5,756.5"/><polyline points="237.5,698.5 257.5,762.5"/><polyline points="277.5,698.5 317.5,754.5"/><polyline points="277.5,698.5 288.5,756.5"/><polyline points="277.5,698.5 257.5,762.5"/><polyline points="195.5,754.5 210.5,752.5 227.5,756.5 288.5,756.5 305.5,752.5 320.5,756.5"/><polyline points="243.5,756.5 243.5,762.5 272.5,762.5 272.5,756.5"/></g>
<g stroke="#ffffff" stroke-width="1" fill="none" stroke-dasharray="3,3"><polyline points="381.5,576.5 444.5,534.5"/><polyline points="100.5,530.5 133.5,576.5"/><polyline points="42.5,620.5 71.5,658.5"/><polyline points="381.5,576.5 443.5,617.5"/><polyline points="472.5,663.5 443.5,741.5"/><polyline points="237.5,698.5 277.5,625.5"/></g>
<line x1="257.5" y1="576.1" x2="257.5" y2="824.1" stroke="#000" stroke-width="1.2"/>
<line x1="68" y1="866" x2="68" y2="843" stroke="#00a000" stroke-width="1"/>
<line x1="68" y1="874" x2="92" y2="874" stroke="#ff0000" stroke-width="1"/>
<line x1="68" y1="850" x2="68" y2="874" stroke="#00a000" stroke-width="1"/>
<text x="66" y="868" font-size="8" fill="#0000ff" font-family="Liberation Sans">z</text>
<text x="92" y="871" font-size="9" fill="#ff0000" font-family="Liberation Sans">x</text>
<text x="64" y="850" font-size="8" fill="#00a000" font-family="Liberation Sans">y</text>
<text x="47" y="542" font-size="11" fill="#b4b4b4" font-family="Liberation Sans">Top</text>
<rect x="41" y="529" width="432" height="371" fill="none" stroke="#2c3848" stroke-width="2"/>
</svg>
<svg class="a" style="left:478px;top:528px" width="434" height="373" viewBox="478 528 434 373">
<rect x="478" y="528" width="434" height="373" fill="#878787"/>
<g stroke="#5c5c5c" stroke-width="1"><line x1="491.5" y1="528" x2="491.5" y2="901"/><line x1="502.5" y1="528" x2="502.5" y2="901"/><line x1="513.5" y1="528" x2="513.5" y2="901"/><line x1="524.5" y1="528" x2="524.5" y2="901"/><line x1="535.5" y1="528" x2="535.5" y2="901"/><line x1="546.5" y1="528" x2="546.5" y2="901"/><line x1="557.5" y1="528" x2="557.5" y2="901"/><line x1="568.5" y1="528" x2="568.5" y2="901"/><line x1="579.5" y1="528" x2="579.5" y2="901"/><line x1="601.5" y1="528" x2="601.5" y2="901"/><line x1="612.5" y1="528" x2="612.5" y2="901"/><line x1="623.5" y1="528" x2="623.5" y2="901"/><line x1="634.5" y1="528" x2="634.5" y2="901"/><line x1="645.5" y1="528" x2="645.5" y2="901"/><line x1="656.5" y1="528" x2="656.5" y2="901"/><line x1="667.5" y1="528" x2="667.5" y2="901"/><line x1="678.5" y1="528" x2="678.5" y2="901"/><line x1="689.5" y1="528" x2="689.5" y2="901"/><line x1="711.5" y1="528" x2="711.5" y2="901"/><line x1="722.5" y1="528" x2="722.5" y2="901"/><line x1="734.5" y1="528" x2="734.5" y2="901"/><line x1="745.5" y1="528" x2="745.5" y2="901"/><line x1="756.5" y1="528" x2="756.5" y2="901"/><line x1="767.5" y1="528" x2="767.5" y2="901"/><line x1="778.5" y1="528" x2="778.5" y2="901"/><line x1="789.5" y1="528" x2="789.5" y2="901"/><line x1="800.5" y1="528" x2="800.5" y2="901"/><line x1="822.5" y1="528" x2="822.5" y2="901"/><line x1="833.5" y1="528" x2="833.5" y2="901"/><line x1="844.5" y1="528" x2="844.5" y2="901"/><line x1="855.5" y1="528" x2="855.5" y2="901"/><line x1="866.5" y1="528" x2="866.5" y2="901"/><line x1="877.5" y1="528" x2="877.5" y2="901"/><line x1="888.5" y1="528" x2="888.5" y2="901"/><line x1="899.5" y1="528" x2="899.5" y2="901"/><line x1="478" y1="532.5" x2="912" y2="532.5"/><line x1="478" y1="543.5" x2="912" y2="543.5"/><line x1="478" y1="554.5" x2="912" y2="554.5"/><line x1="478" y1="565.5" x2="912" y2="565.5"/><line x1="478" y1="576.5" x2="912" y2="576.5"/><line x1="478" y1="587.5" x2="912" y2="587.5"/><line x1="478" y1="598.5" x2="912" y2="598.5"/><line x1="478" y1="620.5" x2="912" y2="620.5"/><line x1="478" y1="631.5" x2="912" y2="631.5"/><line x1="478" y1="643.5" x2="912" y2="643.5"/><line x1="478" y1="654.5" x2="912" y2="654.5"/><line x1="478" y1="665.5" x2="912" y2="665.5"/><line x1="478" y1="676.5" x2="912" y2="676.5"/><line x1="478" y1="687.5" x2="912" y2="687.5"/><line x1="478" y1="698.5" x2="912" y2="698.5"/><line x1="478" y1="709.5" x2="912" y2="709.5"/><line x1="478" y1="731.5" x2="912" y2="731.5"/><line x1="478" y1="742.5" x2="912" y2="742.5"/><line x1="478" y1="753.5" x2="912" y2="753.5"/><line x1="478" y1="764.5" x2="912" y2="764.5"/><line x1="478" y1="775.5" x2="912" y2="775.5"/><line x1="478" y1="786.5" x2="912" y2="786.5"/><line x1="478" y1="797.5" x2="912" y2="797.5"/><line x1="478" y1="808.5" x2="912" y2="808.5"/><line x1="478" y1="819.5" x2="912" y2="819.5"/><line x1="478" y1="841.5" x2="912" y2="841.5"/><line x1="478" y1="852.5" x2="912" y2="852.5"/><line x1="478" y1="863.5" x2="912" y2="863.5"/><line x1="478" y1="874.5" x2="912" y2="874.5"/><line x1="478" y1="885.5" x2="912" y2="885.5"/><line x1="478" y1="896.5" x2="912" y2="896.5"/></g>
<g stroke="#404040" stroke-width="1"><line x1="480.5" y1="528" x2="480.5" y2="901"/><line x1="590.5" y1="528" x2="590.5" y2="901"/><line x1="700.5" y1="528" x2="700.5" y2="901"/><line x1="811.5" y1="528" x2="811.5" y2="901"/><line x1="478" y1="609.5" x2="912" y2="609.5"/><line x1="478" y1="720.5" x2="912" y2="720.5"/><line x1="478" y1="830.5" x2="912" y2="830.5"/></g>
<g stroke="#ffffff" stroke-width="1" fill="none"><polyline points="481.5,721.5 481.5,549.5"/><polyline points="481.5,549.5 592.5,530.5"/><polyline points="492.5,530.5 590.5,578.5 638.5,578.5 812.5,579.5"/><polyline points="590.5,530.5 590.5,721.5"/><polyline points="481.5,550.5 590.5,625.5"/><polyline points="481.5,643.5 590.5,625.5"/><polyline points="590.5,530.5 698.5,616.5"/><polyline points="812.5,530.5 812.5,721.5"/><polyline points="812.5,579.5 911.5,543.5"/><polyline points="853.5,530.5 911.5,569.5"/><polyline points="481.5,721.5 698.5,612.5"/><polyline points="481.5,644.5 587.5,719.5"/><polyline points="481.5,682.5 700.5,696.5"/><polyline points="481.5,689.5 590.5,697.5 700.5,701.5"/><polyline points="481.5,697.5 700.5,715.5"/><polyline points="481.5,705.5 700.5,710.5"/><polyline points="481.5,710.5 640.5,716.5"/><polyline points="481.5,714.5 600.5,719.5"/><polyline points="696.5,612.5 851.5,612.5 851.5,720.5"/><polyline points="696.5,612.5 696.5,720.5"/><polyline points="696.5,613.5 746.5,625.5 801.5,625.5 851.5,613.5"/><polyline points="746.5,625.5 739.5,716.5"/><polyline points="801.5,625.5 810.5,718.5"/><polyline points="698.5,614.5 738.5,715.5"/><polyline points="698.5,614.5 810.5,718.5"/><polyline points="810.5,718.5 851.5,613.5"/><polyline points="839.5,613.5 839.5,718.5"/><polyline points="843.5,613.5 843.5,718.5"/><polyline points="846.5,614.5 846.5,718.5"/><polyline points="849.5,614.5 849.5,718.5"/><polyline points="851.5,623.5 870.5,630.5 870.5,713.5"/><polyline points="853.5,636.5 870.5,636.5"/><polyline points="862.5,636.5 862.5,712.5"/><polyline points="867.5,636.5 867.5,712.5"/><polyline points="853.5,635.5 868.5,712.5"/><polyline points="868.5,635.5 853.5,712.5"/><polyline points="690.5,695.5 910.5,662.5"/><polyline points="690.5,700.5 910.5,666.5"/><polyline points="700.5,704.5 910.5,691.5"/><polyline points="700.5,708.5 910.5,701.5"/><polyline points="700.5,712.5 910.5,708.5"/><polyline points="700.5,716.5 910.5,713.5"/><polyline points="481.5,721.5 910.5,721.5"/></g>
<g stroke="#ffffff" stroke-width="1" fill="none" stroke-dasharray="3,3"><polyline points="590.5,625.5 632.5,642.5 698.5,678.5 810.5,719.5"/><polyline points="700.5,673.5 801.5,720.5"/><polyline points="732.5,694.5 811.5,682.5"/></g>
<line x1="870" y1="720.8" x2="912" y2="720.8" stroke="#000" stroke-width="1"/>
<g stroke="#14a5e6" stroke-width="4" fill="none"><line x1="498.7" y1="722" x2="867.5" y2="722"/><polyline points="498.7,731 699.5,809 867.5,731"/></g>
<text x="691" y="843.5" font-size="36" fill="#14a5e6" font-family="Liberation Sans" letter-spacing="0">5</text>
<line x1="506" y1="873" x2="506" y2="849" stroke="#0000ff" stroke-width="1"/>
<line x1="482" y1="873" x2="506" y2="873" stroke="#00a000" stroke-width="1"/>
<text x="506" y="847" font-size="9" fill="#0000ff" font-family="Liberation Sans">z</text>
<text x="480" y="870" font-size="9" fill="#00a000" font-family="Liberation Sans">y</text>
<text x="506" y="870" font-size="9" fill="#ff0000" font-family="Liberation Sans">x</text>
<text x="484" y="542" font-size="11" fill="#b4b4b4" font-family="Liberation Sans">Left</text>
<rect x="479" y="529" width="432" height="371" fill="none" stroke="#2c3848" stroke-width="2"/>
</svg>
<div class="a" style="left:914px;top:104px;width:366px;height:1px;background:#f4f4f4"></div>
<div class="a" style="left:914.5px;top:80px;width:28px;height:25px;border:1px solid;border-bottom:0;border-color:#f4f4f4 #808080 #808080 #f4f4f4;border-radius:3px 3px 0 0;background:#c8c8c8"></div>
<div class="a" style="left:944px;top:79px;width:28px;height:26px;border:1px solid;border-bottom:0;border-color:#f4f4f4 #808080 #808080 #f4f4f4;border-radius:3px 3px 0 0;background:#c8c8c8"></div>
<div class="a" style="left:972.5px;top:80px;width:28px;height:25px;border:1px solid;border-bottom:0;border-color:#f4f4f4 #808080 #808080 #f4f4f4;border-radius:3px 3px 0 0;background:#c8c8c8"></div>
<div class="a" style="left:1002px;top:80px;width:28px;height:25px;border:1px solid;border-bottom:0;border-color:#f4f4f4 #808080 #808080 #f4f4f4;border-radius:3px 3px 0 0;background:#c8c8c8"></div>
<div class="a" style="left:1030.5px;top:80px;width:28px;height:25px;border:1px solid;border-bottom:0;border-color:#f4f4f4 #808080 #808080 #f4f4f4;border-radius:3px 3px 0 0;background:#c8c8c8"></div>
<div class="a" style="left:1059px;top:80px;width:28px;height:25px;border:1px solid;border-bottom:0;border-color:#f4f4f4 #808080 #808080 #f4f4f4;border-radius:3px 3px 0 0;background:#c8c8c8"></div>
<svg class="a" style="left:914px;top:78px" width="180" height="28" viewBox="914 78 180 28"><g stroke="#f8f0b0" stroke-width="1.2"><path d="M920,88 L932,88 M926,82 L926,94 M922,84 L930,92 M930,84 L922,92"/></g><circle cx="926" cy="88" r="2.5" fill="#fffbe0"/><path d="M927,89 L939,98 L934,98.5 L937,103 L935,104 L932,99.5 L929,102 Z" fill="#f4f4f4" stroke="#333" stroke-width="0.8"/><defs><linearGradient id="arcg" x1="0" y1="0" x2="1" y2="1"><stop offset="0" stop-color="#c0c8e8"/><stop offset="1" stop-color="#202840"/></linearGradient></defs><rect x="949" y="83" width="18" height="18" fill="none" stroke="#999" stroke-width="0.5"/><circle cx="949" cy="83" r="0.9" fill="#000"/><circle cx="967" cy="101" r="0.9" fill="#000"/><path d="M951,100 Q952,86 966,85" fill="none" stroke="#202840" stroke-width="7"/><path d="M951,100 Q952,86 966,85" fill="none" stroke="#9aa4cc" stroke-width="2.5"/><rect x="983" y="82" width="7" height="7" fill="#dde" stroke="#445"/><path d="M986.5,89 L986.5,98 M979,98 L986.5,91 L994,98" stroke="#334" fill="none"/><rect x="977" y="97" width="5" height="5" fill="#eef" stroke="#445"/><rect x="984" y="97" width="5" height="5" fill="#eef" stroke="#445"/><rect x="991" y="97" width="5" height="5" fill="#eef" stroke="#445"/><circle cx="1017" cy="92" r="7" fill="#e8e8e8" stroke="#111" stroke-width="2.2"/><circle cx="1017" cy="92" r="1.8" fill="#e02020"/><path d="M1017,86 L1017,98 M1011,92 L1023,92 M1012.8,87.8 L1021.2,96.2 M1021.2,87.8 L1012.8,96.2" stroke="#777" stroke-width="0.6"/><path d="M1008,86 A10,10 0 0 0 1008,98 M1006,84 A12,12 0 0 0 1006,100" fill="none" stroke="#666" stroke-width="0.8"/><rect x="1036" y="83" width="19" height="15" fill="#222" rx="1.5"/><rect x="1038" y="85" width="15" height="10" fill="#fff"/><path d="M1042,94 L1046,86 L1050,94 Z" fill="#e02020"/><rect x="1040" y="86" width="3" height="7" fill="#3040a0"/><rect x="1041" y="99" width="9" height="2" fill="#333"/><rect x="1045" y="98" width="2" height="1" fill="#2c2"/><path d="M1066,85 L1070,82 L1081,82 L1081,87 L1066,87 Z" fill="#444" stroke="#222" stroke-width="0.5"/><rect x="1072" y="87" width="3.5" height="12" fill="#b02020" stroke="#301010" stroke-width="0.5"/><rect x="1072" y="99" width="3.5" height="3" fill="#222"/></svg>
<svg class="a" style="left:1090px;top:74px" width="34" height="34" viewBox="1090 74 34 34"><text x="1095.5" y="103" font-family="Liberation Sans" font-size="36" fill="#10a8ea" stroke="#10a8ea" stroke-width="0.6">4</text></svg>
<div class="fld" style="left:920.5px;top:110px;width:146px;height:20px;line-height:18px;">level</div>
<div class="a" style="left:1070px;top:110px;width:16px;height:19px;background:#008a00;border:1px solid;border-color:#808080 #f4f4f4 #f4f4f4 #808080"></div>
<div class="a" style="left:921px;top:135px;width:166px;height:23px;background:#e2e2e2;border:1px solid;border-color:#707070 #f4f4f4 #f4f4f4 #707070;box-shadow:inset 1px 1px 0 #202020"><div class="t" style="left:4px;top:4px">Modifier List</div><div class="a" style="left:152px;top:1px;width:12px;height:19px;background:#8a9cb4;border:1px solid;border-color:#dde #445 #445 #dde"><div class="a" style="left:2px;top:7px;border:3px solid transparent;border-top:3px solid #000;border-bottom:0"></div></div></div>
<div class="btn" style="left:930px;top:166.0px;width:72px;height:20px;">Edit Mesh</div>
<div class="btn" style="left:1005px;top:166.0px;width:72px;height:20px;">Cap Holes</div>
<div class="btn" style="left:930px;top:188.5px;width:72px;height:20px;">UVW Map</div>
<div class="btn" style="left:1005px;top:188.5px;width:72px;height:20px;">Optimize</div>
<div class="btn" style="left:930px;top:211.0px;width:72px;height:20px;">Unwrap UVW</div>
<div class="btn" style="left:1005px;top:211.0px;width:72px;height:20px;">STL Check</div>
<div class="a" style="left:921px;top:239px;width:164px;height:126px;background:#e2e2e2;border:1px solid;border-color:#202020 #8aa0c0 #8aa0c0 #202020"></div>
<div class="a" style="left:922px;top:240px;width:162px;height:17px;background:#888"></div>
<div class="a" style="left:928px;top:243px;width:10px;height:10px;background:#000"><div class="a" style="left:2px;top:4px;width:6px;height:2px;background:#fff"></div><div class="a" style="left:4px;top:2px;width:2px;height:6px;background:#fff"></div></div>
<div class="t" style="left:945px;top:242px;">Editable Mesh</div>
<svg class="a" style="left:925px;top:372px" width="160" height="20" viewBox="925 372 160 20"><path d="M928,381 L934,381 M934,376 L934,386 M935,378 L941,378 L941,384 L935,384 Z" stroke="#000" stroke-width="1.5" fill="#000"/><line x1="954.5" y1="374" x2="954.5" y2="389" stroke="#707070"/><rect x="968" y="376" width="6" height="12" fill="#fff" stroke="#000" stroke-width="1.5"/><line x1="990.5" y1="374" x2="990.5" y2="389" stroke="#707070"/><path d="M1001,376 L1008,386 L1015,376" stroke="#999" fill="none"/><circle cx="1008" cy="385" r="2" fill="none" stroke="#999"/><rect x="1027" y="378" width="9" height="10" rx="4" fill="none" stroke="#999"/><line x1="1050.5" y1="374" x2="1050.5" y2="389" stroke="#707070"/><rect x="1061" y="376" width="14" height="12" fill="#eee" stroke="#0000a0" stroke-width="1.5"/><rect x="1064" y="380" width="9" height="7" fill="none" stroke="#222" stroke-dasharray="1.5,1"/></svg>
<div class="a" style="left:917px;top:403px;width:181px;height:4px;border-top:1px solid #f4f4f4;border-bottom:2px solid #202020"></div>
<div class="a" style="left:916px;top:414px;width:179px;height:527px;border:1px solid;border-color:#808080 #f4f4f4 #f4f4f4 #808080"></div>
<div class="a" style="left:919px;top:427px;width:166px;height:243px;border:1px solid;border-color:#808080 #f4f4f4 #f4f4f4 #808080;box-shadow:inset 1px 1px 0 #f4f4f4"></div>
<div class="roll" style="left:923px;top:419px;width:158px;height:16px"><b>-</b>Selection</div>
<svg class="a" style="left:940px;top:444px" width="115" height="20" viewBox="940 444 115 20"><g fill="#f00"><rect x="944" y="455" width="2" height="2"/><rect x="951" y="451" width="2" height="2"/><rect x="954" y="446" width="2" height="2"/><rect x="950" y="458" width="2" height="2"/></g><path d="M968,455 L983,447 L977,459 Z" fill="none" stroke="#f00" stroke-width="1.2"/><path d="M992,455 L1007,447 L1001,459 Z" fill="#f00" stroke="#000" stroke-width="0.8"/><rect x="1017" y="447" width="12" height="12" fill="#f00" stroke="#600" stroke-width="0.6"/><path d="M1040,450 L1044,447 L1053,447 L1053,456 L1049,460 L1040,460 Z" fill="#f00" stroke="#222" stroke-width="0.6"/><path d="M1049,460 L1049,451 L1053,447 L1053,456 Z" fill="#803080"/></svg>
<div class="cb" style="left:929px;top:473px"></div>
<div class="t" style="left:948px;top:473px;color:#808080;text-shadow:1px 1px 0 #ececec">By Vertex</div>
<div class="cb" style="left:929px;top:493px"></div>
<div class="t" style="left:948px;top:493px;color:#808080;text-shadow:1px 1px 0 #ececec">Ignore Backfacing</div>
<div class="cb" style="left:929px;top:512px"></div>
<div class="t" style="left:948px;top:512px;color:#808080;text-shadow:1px 1px 0 #ececec">Ignore Visible Edges</div>
<div class="t" style="left:941px;top:531px;color:#808080;text-shadow:1px 1px 0 #ececec">Planar Thresh:</div>
<div class="fld d" style="left:1011px;top:529px;width:44px;height:16px;line-height:14px;">45.0</div>
<div class="spn" style="left:1058px;top:529px;height:16px"></div>
<div class="cb" style="left:929px;top:551px"></div>
<div class="t" style="left:948px;top:551px;color:#808080;text-shadow:1px 1px 0 #ececec">Show Normals</div>
<div class="t" style="left:980px;top:569px;color:#808080;text-shadow:1px 1px 0 #ececec">Scale:</div>
<div class="fld d" style="left:1011px;top:567px;width:44px;height:16px;line-height:14px;">20.0</div>
<div class="spn" style="left:1058px;top:567px;height:16px"></div>
<div class="btn dis" style="left:927px;top:588px;width:72px;height:18px;">Hide</div>
<div class="btn dis" style="left:1004px;top:588px;width:72px;height:18px;">Unhide All</div>
<div class="t" style="left:930px;top:609px;">Named Selections:</div>
<div class="btn dis" style="left:927px;top:627px;width:72px;height:18px;">Copy</div>
<div class="btn dis" style="left:1004px;top:627px;width:72px;height:18px;">Paste</div>
<div class="t" style="left:964px;top:648px;">Whole Object Selected</div>
<div class="roll" style="left:923px;top:676px;width:158px;height:17px"><b>+</b>Soft Selection</div>
<div class="a" style="left:1099px;top:106px;width:176px;height:835px;border:1px solid;border-color:#808080 #f4f4f4 #f4f4f4 #808080"></div>
<div class="a" style="left:1102px;top:119px;width:165px;height:510px;border:1px solid;border-color:#808080 #f4f4f4 #f4f4f4 #808080"></div>
<div class="roll" style="left:1106px;top:111px;width:158px;height:16px"><b>-</b>Edit Geometry</div>
<div class="btn dis" style="left:1110px;top:134px;width:72px;height:18px;">Create</div>
<div class="btn dis" style="left:1187px;top:134px;width:72px;height:18px;">Delete</div>
<div class="btn" style="left:1110px;top:156px;width:72px;height:18px;">Attach</div>
<div class="btn" style="left:1187px;top:156px;width:72px;height:18px;">Attach List</div>
<div class="btn dis" style="left:1110px;top:179px;width:72px;height:18px;">Break</div>
<div class="btn dis" style="left:1187px;top:179px;width:72px;height:18px;">Turn</div>
<div class="grp" style="left:1109px;top:201px;width:152px;height:69px"></div>
<div class="btn dis" style="left:1115px;top:207px;width:68px;height:18px;">Extrude</div>
<div class="fld d" style="left:1188px;top:208px;width:53px;height:16px;line-height:14px;">0.0</div>
<div class="spn" style="left:1245px;top:208px;height:16px"></div>
<div class="btn dis" style="left:1115px;top:229px;width:68px;height:18px;">Bevel</div>
<div class="fld d" style="left:1188px;top:231px;width:53px;height:16px;line-height:14px;">0.0</div>
<div class="spn" style="left:1245px;top:231px;height:16px"></div>
<div class="t" style="left:1115px;top:253px;color:#808080;text-shadow:1px 1px 0 #ececec">Normal:</div>
<div class="rb" style="left:1152px;top:253px"><div class="a" style="left:3px;top:3px;width:4px;height:4px;border-radius:50%;background:#777"></div></div>
<div class="t" style="left:1170px;top:253px;color:#808080;text-shadow:1px 1px 0 #ececec">Group</div>
<div class="rb" style="left:1205px;top:253px"></div>
<div class="t" style="left:1223px;top:253px;color:#808080;text-shadow:1px 1px 0 #ececec">Local</div>
<div class="grp" style="left:1109px;top:274px;width:152px;height:72px"></div>
<div class="btn dis" style="left:1115px;top:281px;width:68px;height:18px;">Slice Plane</div>
<div class="btn dis" style="left:1187px;top:281px;width:68px;height:18px;">Slice</div>
<div class="btn dis" style="left:1115px;top:303px;width:68px;height:19px;">Cut</div>
<div class="cb" style="left:1194px;top:307px"></div>
<div class="t" style="left:1212px;top:306px;color:#808080;text-shadow:1px 1px 0 #ececec">Split</div>
<div class="cb" style="left:1117px;top:326px"><svg class="a" style="left:1px;top:1px" width="10" height="10"><polyline points="1,5 4,8 9,2" fill="none" stroke="#888" stroke-width="2"/></svg></div>
<div class="t" style="left:1136px;top:326px;color:#808080;text-shadow:1px 1px 0 #ececec">Refine Ends</div>
<div class="grp" style="left:1109px;top:354px;width:152px;height:56px"></div><div class="t" style="left:1117px;top:347px;background:#c8c8c8;padding:0 1px;color:#000">Weld</div>
<div class="btn dis" style="left:1115px;top:364px;width:68px;height:18px;">Selected</div>
<div class="fld d" style="left:1188px;top:366px;width:55px;height:16px;line-height:14px;">0.1</div>
<div class="spn" style="left:1246px;top:366px;height:16px"></div>
<div class="btn dis" style="left:1115px;top:387px;width:68px;height:18px;">Target</div>
<div class="fld d" style="left:1188px;top:389px;width:25px;height:16px;line-height:14px;">4</div>
<div class="spn" style="left:1217px;top:389px;height:16px"></div>
<div class="t" style="left:1230px;top:390px;color:#808080;text-shadow:1px 1px 0 #ececec">pixels</div>
<div class="grp" style="left:1109px;top:414px;width:152px;height:43px"></div>
<div class="btn dis" style="left:1115px;top:420px;width:68px;height:18px;">Tessellate</div>
<div class="fld d" style="left:1188px;top:421px;width:55px;height:16px;line-height:14px;">25.0</div>
<div class="spn" style="left:1246px;top:421px;height:16px"></div>
<div class="t" style="left:1115px;top:441px;color:#808080;text-shadow:1px 1px 0 #ececec">by:</div>
<div class="rb" style="left:1134px;top:441px"><div class="a" style="left:3px;top:3px;width:4px;height:4px;border-radius:50%;background:#777"></div></div>
<div class="t" style="left:1151px;top:441px;color:#808080;text-shadow:1px 1px 0 #ececec">Edge</div>
<div class="rb" style="left:1182px;top:441px"></div>
<div class="t" style="left:1199px;top:441px;color:#808080;text-shadow:1px 1px 0 #ececec">Face-Center</div>
<div class="grp" style="left:1109px;top:462px;width:152px;height:42px"></div>
<div class="btn" style="left:1115px;top:466px;width:68px;height:18px;">Explode</div>
<div class="fld" style="left:1187px;top:467px;width:55px;height:16px;line-height:14px;">24.0</div>
<div class="spn" style="left:1246px;top:467px;height:16px"></div>
<div class="t" style="left:1115px;top:490px;">to:</div>
<div class="rb" style="left:1134px;top:490px"><div class="a" style="left:3px;top:3px;width:4px;height:4px;border-radius:50%;background:#000"></div></div>
<div class="t" style="left:1151px;top:490px;">Objects</div>
<div class="rb" style="left:1195px;top:490px"></div>
<div class="t" style="left:1212px;top:490px;">Elements</div>
<div class="btn" style="left:1110px;top:512px;width:149px;height:18px;">Remove Isolated Vertices</div>
<div class="btn dis" style="left:1110px;top:535px;width:149px;height:18px;">Select Open Edges</div>
<div class="btn dis" style="left:1110px;top:558px;width:149px;height:18px;">Create Shape from Edges</div>
<div class="btn" style="left:1110px;top:580px;width:72px;height:18px;">View Align</div>
<div class="btn" style="left:1187px;top:580px;width:72px;height:18px;">Grid Align</div>
<div class="btn dis" style="left:1110px;top:603px;width:72px;height:18px;">Make Planar</div>
<div class="btn dis" style="left:1187px;top:603px;width:72px;height:18px;">Collapse</div>
<div class="a" style="left:1102px;top:644px;width:165px;height:296px;border:1px solid;border-bottom:0;border-color:#808080 #f4f4f4 #f4f4f4 #808080"></div>
<div class="roll" style="left:1106px;top:636px;width:158px;height:16px"><b>-</b>Surface Properties</div>
<div class="cb" style="left:1112px;top:658px"></div>
<div class="t" style="left:1130px;top:658px;">Subdivision Displacement</div>
<div class="cb" style="left:1134px;top:677px"><svg class="a" style="left:1px;top:1px" width="10" height="10"><polyline points="1,5 4,8 9,2" fill="none" stroke="#888" stroke-width="2"/></svg></div>
<div class="t" style="left:1152px;top:677px;color:#808080;text-shadow:1px 1px 0 #ececec">Split Mesh</div>
<div class="grp" style="left:1109px;top:705px;width:152px;height:35px"></div><div class="t" style="left:1117px;top:698px;background:#c8c8c8;padding:0 1px;color:#888">Subdivision Presets</div>
<div class="btn dis" style="left:1115px;top:715px;width:44px;height:16px;">Low</div>
<div class="btn dis" style="left:1163px;top:715px;width:44px;height:16px;">Medium</div>
<div class="btn dis" style="left:1211px;top:715px;width:44px;height:16px;">High</div>
<div class="grp" style="left:1109px;top:750px;width:152px;height:192px"></div><div class="t" style="left:1117px;top:743px;background:#c8c8c8;padding:0 1px;color:#888">Subdivision Method</div>
<div class="rb" style="left:1118px;top:763px"></div>
<div class="t" style="left:1136px;top:763px;color:#808080;text-shadow:1px 1px 0 #ececec">Regular</div>
<div class="t" style="left:1137px;top:780px;color:#808080;text-shadow:1px 1px 0 #ececec">Steps:</div>
<div class="fld d" style="left:1188px;top:779px;width:52px;height:16px;line-height:14px;">2</div>
<div class="spn" style="left:1242px;top:779px;height:16px"></div>
<div class="rb" style="left:1118px;top:802px"></div>
<div class="t" style="left:1136px;top:801px;color:#808080;text-shadow:1px 1px 0 #ececec">Spatial</div>
<div class="rb" style="left:1118px;top:820px"></div>
<div class="t" style="left:1136px;top:819px;color:#808080;text-shadow:1px 1px 0 #ececec">Curvature</div>
<div class="rb" style="left:1118px;top:838px"></div>
<div class="t" style="left:1136px;top:837px;color:#808080;text-shadow:1px 1px 0 #ececec">Spatial and Curvature</div>
<div class="t" style="left:1137px;top:855px;color:#808080;text-shadow:1px 1px 0 #ececec">Edge:</div>
<div class="fld d" style="left:1188px;top:854px;width:52px;height:16px;line-height:14px;">20.0</div>
<div class="spn" style="left:1242px;top:854px;height:16px"></div>
<div class="t" style="left:1137px;top:875px;color:#808080;text-shadow:1px 1px 0 #ececec">Distance:</div>
<div class="fld d" style="left:1188px;top:875px;width:52px;height:16px;line-height:14px;">20.0</div>
<div class="spn" style="left:1242px;top:875px;height:16px"></div>
<div class="t" style="left:1137px;top:895px;color:#808080;text-shadow:1px 1px 0 #ececec">Angle:</div>
<div class="fld d" style="left:1188px;top:896px;width:52px;height:16px;line-height:14px;">10.0</div>
<div class="spn" style="left:1242px;top:896px;height:16px"></div>
<div class="cb" style="left:1121px;top:920px"></div>
<div class="t" style="left:1139px;top:920px;color:#808080;text-shadow:1px 1px 0 #ececec">View-Dependent</div>
<div class="a" style="left:1272px;top:903px;width:2px;height:37px;background:#000"></div>
<svg class="a" style="left:1110px;top:85px" width="70" height="85" viewBox="1110 85 70 85"><line x1="1117.8" y1="92" x2="1172.9" y2="164.3" stroke="#14a5e6" stroke-width="4"/></svg>
<div class="btn" style="left:41px;top:902px;width:15px;height:16px;"><span style="font-size:11px">&lt;</span></div>
<div class="a" style="left:56px;top:902px;width:125px;height:16px;background:#c8c8c8;border:1px solid;border-color:#f4f4f4 #202020 #202020 #f4f4f4;text-align:center;line-height:14px">0 / 100</div>
<div class="btn" style="left:181px;top:902px;width:15px;height:16px;"><span style="font-size:11px">&gt;</span></div>
<div class="a" style="left:40px;top:919px;width:873px;height:1px;background:#808080"></div>
<div class="a" style="left:40px;top:920px;width:873px;height:1px;background:#f4f4f4"></div>
<div class="a" style="left:0px;top:944px;width:40px;height:1px;background:#808080"></div>
<div class="a" style="left:40px;top:945px;width:873px;height:1px;background:#f4f4f4"></div>
<svg class="a" style="left:40px;top:918px" width="873" height="30" viewBox="40 918 873 30"><line x1="93.6" y1="922" x2="93.6" y2="944" stroke="#888"/><line x1="101.3" y1="922" x2="101.3" y2="931" stroke="#888"/><line x1="108.9" y1="922" x2="108.9" y2="931" stroke="#888"/><line x1="116.6" y1="922" x2="116.6" y2="931" stroke="#888"/><line x1="124.2" y1="922" x2="124.2" y2="931" stroke="#888"/><line x1="131.9" y1="922" x2="131.9" y2="931" stroke="#888"/><line x1="139.6" y1="922" x2="139.6" y2="931" stroke="#888"/><line x1="147.2" y1="922" x2="147.2" y2="931" stroke="#888"/><line x1="154.9" y1="922" x2="154.9" y2="931" stroke="#888"/><line x1="162.5" y1="922" x2="162.5" y2="931" stroke="#888"/><line x1="170.2" y1="922" x2="170.2" y2="944" stroke="#888"/><line x1="177.9" y1="922" x2="177.9" y2="931" stroke="#888"/><line x1="185.5" y1="922" x2="185.5" y2="931" stroke="#888"/><line x1="193.2" y1="922" x2="193.2" y2="931" stroke="#888"/><line x1="200.8" y1="922" x2="200.8" y2="931" stroke="#888"/><line x1="208.5" y1="922" x2="208.5" y2="931" stroke="#888"/><line x1="216.2" y1="922" x2="216.2" y2="931" stroke="#888"/><line x1="223.8" y1="922" x2="223.8" y2="931" stroke="#888"/><line x1="231.5" y1="922" x2="231.5" y2="931" stroke="#888"/><line x1="239.1" y1="922" x2="239.1" y2="931" stroke="#888"/><line x1="246.8" y1="922" x2="246.8" y2="944" stroke="#888"/><line x1="254.5" y1="922" x2="254.5" y2="931" stroke="#888"/><line x1="262.1" y1="922" x2="262.1" y2="931" stroke="#888"/><line x1="269.8" y1="922" x2="269.8" y2="931" stroke="#888"/><line x1="277.4" y1="922" x2="277.4" y2="931" stroke="#888"/><line x1="285.1" y1="922" x2="285.1" y2="931" stroke="#888"/><line x1="292.8" y1="922" x2="292.8" y2="931" stroke="#888"/><line x1="300.4" y1="922" x2="300.4" y2="931" stroke="#888"/><line x1="308.1" y1="922" x2="308.1" y2="931" stroke="#888"/><line x1="315.7" y1="922" x2="315.7" y2="931" stroke="#888"/><line x1="323.4" y1="922" x2="323.4" y2="944" stroke="#888"/><line x1="331.1" y1="922" x2="331.1" y2="931" stroke="#888"/><line x1="338.7" y1="922" x2="338.7" y2="931" stroke="#888"/><line x1="346.4" y1="922" x2="346.4" y2="931" stroke="#888"/><line x1="354.0" y1="922" x2="354.0" y2="931" stroke="#888"/><line x1="361.7" y1="922" x2="361.7" y2="931" stroke="#888"/><line x1="369.4" y1="922" x2="369.4" y2="931" stroke="#888"/><line x1="377.0" y1="922" x2="377.0" y2="931" stroke="#888"/><line x1="384.7" y1="922" x2="384.7" y2="931" stroke="#888"/><line x1="392.3" y1="922" x2="392.3" y2="931" stroke="#888"/><line x1="400.0" y1="922" x2="400.0" y2="944" stroke="#888"/><line x1="407.7" y1="922" x2="407.7" y2="931" stroke="#888"/><line x1="415.3" y1="922" x2="415.3" y2="931" stroke="#888"/><line x1="423.0" y1="922" x2="423.0" y2="931" stroke="#888"/><line x1="430.6" y1="922" x2="430.6" y2="931" stroke="#888"/><line x1="438.3" y1="922" x2="438.3" y2="931" stroke="#888"/><line x1="446.0" y1="922" x2="446.0" y2="931" stroke="#888"/><line x1="453.6" y1="922" x2="453.6" y2="931" stroke="#888"/><line x1="461.3" y1="922" x2="461.3" y2="931" stroke="#888"/><line x1="468.9" y1="922" x2="468.9" y2="931" stroke="#888"/><line x1="476.6" y1="922" x2="476.6" y2="944" stroke="#888"/><line x1="484.3" y1="922" x2="484.3" y2="931" stroke="#888"/><line x1="491.9" y1="922" x2="491.9" y2="931" stroke="#888"/><line x1="499.6" y1="922" x2="499.6" y2="931" stroke="#888"/><line x1="507.2" y1="922" x2="507.2" y2="931" stroke="#888"/><line x1="514.9" y1="922" x2="514.9" y2="931" stroke="#888"/><line x1="522.6" y1="922" x2="522.6" y2="931" stroke="#888"/><line x1="530.2" y1="922" x2="530.2" y2="931" stroke="#888"/><line x1="537.9" y1="922" x2="537.9" y2="931" stroke="#888"/><line x1="545.5" y1="922" x2="545.5" y2="931" stroke="#888"/><line x1="553.2" y1="922" x2="553.2" y2="944" stroke="#888"/><line x1="560.9" y1="922" x2="560.9" y2="931" stroke="#888"/><line x1="568.5" y1="922" x2="568.5" y2="931" stroke="#888"/><line x1="576.2" y1="922" x2="576.2" y2="931" stroke="#888"/><line x1="583.8" y1="922" x2="583.8" y2="931" stroke="#888"/><line x1="591.5" y1="922" x2="591.5" y2="931" stroke="#888"/><line x1="599.2" y1="922" x2="599.2" y2="931" stroke="#888"/><line x1="606.8" y1="922" x2="606.8" y2="931" stroke="#888"/><line x1="614.5" y1="922" x2="614.5" y2="931" stroke="#888"/><line x1="622.1" y1="922" x2="622.1" y2="931" stroke="#888"/><line x1="629.8" y1="922" x2="629.8" y2="944" stroke="#888"/><line x1="637.5" y1="922" x2="637.5" y2="931" stroke="#888"/><line x1="645.1" y1="922" x2="645.1" y2="931" stroke="#888"/><line x1="652.8" y1="922" x2="652.8" y2="931" stroke="#888"/><line x1="660.4" y1="922" x2="660.4" y2="931" stroke="#888"/><line x1="668.1" y1="922" x2="668.1" y2="931" stroke="#888"/><line x1="675.8" y1="922" x2="675.8" y2="931" stroke="#888"/><line x1="683.4" y1="922" x2="683.4" y2="931" stroke="#888"/><line x1="691.1" y1="922" x2="691.1" y2="931" stroke="#888"/><line x1="698.7" y1="922" x2="698.7" y2="931" stroke="#888"/><line x1="706.4" y1="922" x2="706.4" y2="944" stroke="#888"/><line x1="714.1" y1="922" x2="714.1" y2="931" stroke="#888"/><line x1="721.7" y1="922" x2="721.7" y2="931" stroke="#888"/><line x1="729.4" y1="922" x2="729.4" y2="931" stroke="#888"/><line x1="737.0" y1="922" x2="737.0" y2="931" stroke="#888"/><line x1="744.7" y1="922" x2="744.7" y2="931" stroke="#888"/><line x1="752.4" y1="922" x2="752.4" y2="931" stroke="#888"/><line x1="760.0" y1="922" x2="760.0" y2="931" stroke="#888"/><line x1="767.7" y1="922" x2="767.7" y2="931" stroke="#888"/><line x1="775.3" y1="922" x2="775.3" y2="931" stroke="#888"/><line x1="783.0" y1="922" x2="783.0" y2="944" stroke="#888"/><line x1="790.7" y1="922" x2="790.7" y2="931" stroke="#888"/><line x1="798.3" y1="922" x2="798.3" y2="931" stroke="#888"/><line x1="806.0" y1="922" x2="806.0" y2="931" stroke="#888"/><line x1="813.6" y1="922" x2="813.6" y2="931" stroke="#888"/><line x1="821.3" y1="922" x2="821.3" y2="931" stroke="#888"/><line x1="829.0" y1="922" x2="829.0" y2="931" stroke="#888"/><line x1="836.6" y1="922" x2="836.6" y2="931" stroke="#888"/><line x1="844.3" y1="922" x2="844.3" y2="931" stroke="#888"/><line x1="851.9" y1="922" x2="851.9" y2="931" stroke="#888"/><line x1="859.6" y1="922" x2="859.6" y2="944" stroke="#888"/><rect x="89.5" y="921.5" width="8" height="23" fill="#a8c0d8" stroke="#6a8098"/><text x="90.5" y="942" font-size="11" font-family="Liberation Sans" fill="#333">0</text><text x="163.2" y="943" font-size="11" font-family="Liberation Sans" fill="#000">10</text><text x="239.8" y="943" font-size="11" font-family="Liberation Sans" fill="#000">20</text><text x="316.4" y="943" font-size="11" font-family="Liberation Sans" fill="#000">30</text><text x="393.0" y="943" font-size="11" font-family="Liberation Sans" fill="#000">40</text><text x="469.6" y="943" font-size="11" font-family="Liberation Sans" fill="#000">50</text><text x="546.2" y="943" font-size="11" font-family="Liberation Sans" fill="#000">60</text><text x="622.8" y="943" font-size="11" font-family="Liberation Sans" fill="#000">70</text><text x="699.4" y="943" font-size="11" font-family="Liberation Sans" fill="#000">80</text><text x="776.0" y="943" font-size="11" font-family="Liberation Sans" fill="#000">90</text><text x="849.6" y="943" font-size="11" font-family="Liberation Sans" fill="#000">100</text></svg>
<svg class="a" style="left:50px;top:922px" width="24" height="22"><rect x="2" y="2" width="18" height="6" fill="none" stroke="#000" stroke-width="1.4"/><path d="M5,5 Q8,3 11,5 T17,5" stroke="#000" fill="none" stroke-width="0.8"/><rect x="2" y="16" width="18" height="4" fill="none" stroke="#000" stroke-width="1.4"/><path d="M6,15 L6,10 M4,12 L6,10 L8,12 M16,10 L16,15 M14,13 L16,15 L18,13" stroke="#000" fill="none" stroke-width="1"/></svg>
<div class="a" style="left:0;top:946px;width:1280px;height:1px;background:#f4f4f4"></div>
<div class="a" style="left:2px;top:948px;width:295px;height:23px;background:#dcc4c4;border:1px solid;border-color:#202020 #8aa0c0 #8aa0c0 #202020"></div>
<div class="a" style="left:2px;top:972px;width:295px;height:22px;background:#fff;border:1px solid;border-color:#202020 #8aa0c0 #8aa0c0 #202020"></div>
<div class="a" style="left:302px;top:948px;width:1px;height:50px;background:#808080"></div>
<div class="a" style="left:306px;top:949px;width:128px;height:22px;border:1px solid;border-color:#808080 #f4f4f4 #f4f4f4 #808080"></div>
<div class="t" style="left:312px;top:954px;">1 Object Selected</div>
<div class="a" style="left:306px;top:974px;width:429px;height:22px;border:1px solid;border-color:#808080 #f4f4f4 #f4f4f4 #808080"></div>
<div class="t" style="left:312px;top:979px;">Click or click-and-drag to select objects</div>
<div class="a" style="left:434px;top:949px;width:300px;height:22px;border:1px solid;border-color:#808080 #f4f4f4 #f4f4f4 #808080;border-left:0"></div>
<svg class="a" style="left:440px;top:950px" width="50" height="20"><path d="M5,7 A3.5,3.5 0 0 1 12,7 L12,9" fill="none" stroke="#000" stroke-width="1.2"/><rect x="4" y="9" width="9" height="7" fill="#000"/><rect x="5" y="11" width="7" height="1" fill="#fff"/><rect x="5" y="13" width="7" height="1" fill="#fff"/><rect x="28" y="2" width="15" height="15" fill="none" stroke="#000"/><circle cx="35.5" cy="9.5" r="2.5" fill="none" stroke="#000"/><path d="M35.5,2 L35.5,6 M35.5,13 L35.5,17 M28,9.5 L32,9.5 M39,9.5 L43,9.5" stroke="#000"/></svg>
<div class="t" style="left:490px;top:953px;">X:</div>
<div class="fld" style="left:501px;top:951px;width:57px;height:20px;line-height:18px;"></div>
<div class="t" style="left:572px;top:953px;">Y:</div>
<div class="fld" style="left:583px;top:951px;width:57px;height:20px;line-height:18px;"></div>
<div class="t" style="left:654px;top:953px;">Z:</div>
<div class="fld" style="left:665px;top:951px;width:57px;height:20px;line-height:18px;"></div>
<div class="a" style="left:737px;top:949px;width:100px;height:22px;border:1px solid;border-color:#808080 #f4f4f4 #f4f4f4 #808080"></div>
<div class="t" style="left:743px;top:954px;">Grid = 10.0</div>
<div class="a" style="left:737px;top:974px;width:100px;height:22px;border:1px solid;border-color:#f4f4f4 #808080 #808080 #f4f4f4"></div>
<div class="t" style="left:743px;top:979px;">Add Time Tag</div>
<div class="a" style="left:839px;top:948px;width:43px;height:46px;border:1px solid;border-color:#f4f4f4 #808080 #808080 #f4f4f4"></div>
<svg class="a" style="left:846px;top:960px" width="30" height="20"><circle cx="7" cy="10" r="5" fill="none" stroke="#000" stroke-width="2.5"/><path d="M12,10 L27,10 M20,10 L20,14 M25,10 L25,14" stroke="#000" stroke-width="2.5"/></svg>
<div class="btn" style="left:886px;top:949px;width:46px;height:22px;">Auto Key</div>
<div class="btn" style="left:886px;top:972px;width:46px;height:22px;">Set Key</div>
<div class="a" style="left:937px;top:949px;width:114px;height:21px;background:#e2e2e2;border:1px solid;border-color:#707070 #f4f4f4 #f4f4f4 #707070;box-shadow:inset 1px 1px 0 #202020"><div class="t" style="left:3px;top:3px">Selected</div><div class="a" style="left:100px;top:1px;width:12px;height:17px;background:#8a9cb4;border:1px solid;border-color:#dde #445 #445 #dde"><div class="a" style="left:2px;top:6px;border:3px solid transparent;border-top:3px solid #000;border-bottom:0"></div></div></div>
<div class="btn" style="left:937px;top:972px;width:114px;height:22px;">Key Filters...</div>
<svg class="a" style="left:1055px;top:948px" width="225" height="48" viewBox="1055 948 225 48"><g fill="#000"><rect x="1060" y="954" width="2" height="10"/><path d="M1068,954 L1063,959 L1068,964 Z M1075,954 L1070,959 L1075,964 Z"/><rect x="1076" y="954" width="1" height="10"/><path d="M1093,954 L1088,959 L1093,964 Z"/><rect x="1095" y="954" width="2" height="10"/><rect x="1099" y="954" width="2" height="10"/><rect x="1109.5" y="951.5" width="16" height="16" fill="#fff" stroke="#000" stroke-width="2"/><path d="M1114,954 L1122,959.5 L1114,965 Z"/><rect x="1133" y="954" width="2" height="10"/><rect x="1137" y="954" width="2" height="10"/><path d="M1141,954 L1146,959 L1141,964 Z"/><rect x="1158" y="954" width="1" height="10"/><path d="M1160,954 L1165,959 L1160,964 Z M1167,954 L1172,959 L1167,964 Z"/><rect x="1172" y="954" width="2" height="10"/><path d="M1066,976 L1062,981 L1066,986 Z M1071,976 L1067,981 L1071,986 Z"/><rect x="1062" y="976" width="1" height="10"/><rect x="1073" y="976" width="1" height="10"/></g><g stroke="#808080"><line x1="1081.5" y1="952" x2="1081.5" y2="966"/><line x1="1153.5" y1="952" x2="1153.5" y2="966"/><line x1="1182" y1="952" x2="1182" y2="990"/></g><rect x="1160" y="974" width="12" height="12" fill="#fff" stroke="#222"/><circle cx="1167" cy="983" r="4" fill="#fff" stroke="#c02020" stroke-width="1.3"/><circle cx="1194" cy="957" r="4.5" fill="#cde" stroke="#0030a0" stroke-width="1.5"/><line x1="1197" y1="961" x2="1202" y2="966" stroke="#0030a0" stroke-width="2"/><rect x="1215" y="952" width="11" height="9" fill="none" stroke="#b02020"/><line x1="1220.5" y1="952" x2="1220.5" y2="961" stroke="#b02020"/><line x1="1215" y1="956.5" x2="1226" y2="956.5" stroke="#b02020"/><circle cx="1214" cy="961" r="3.5" fill="#cde" stroke="#0030a0" stroke-width="1.3"/><path d="M1234,957 L1238,953 L1248,953 L1248,963 L1244,967 L1234,967 Z" fill="#dde8f8" stroke="#0030a0" stroke-width="1.2"/><path d="M1258,957 L1262,953 L1272,953 L1272,963 L1268,967 L1258,967 Z" fill="#dde8f8" stroke="#0030a0" stroke-width="1.2"/><rect x="1264" y="951" width="9" height="9" fill="none" stroke="#b02020"/><rect x="1187" y="974" width="15" height="14" fill="#dde" stroke="#000" stroke-dasharray="2,1"/><circle cx="1194" cy="980" r="4" fill="#cde" stroke="#0030a0" stroke-width="1.3"/><path d="M1213,989 L1211,980 L1213,976 L1215,981 L1216,974 L1218,981 L1220,975 L1221,982 L1223,978 L1224,984 L1221,989 Z" fill="#fff" stroke="#000" stroke-width="1"/><ellipse cx="1240" cy="982" rx="8" ry="4" fill="none" stroke="#000"/><circle cx="1240" cy="982" r="4" fill="#f0d020" stroke="#000"/><rect x="1257" y="975" width="14" height="13" fill="none" stroke="#0030a0" stroke-width="1.3"/><path d="M1260,978 L1268,986" stroke="#000"/></svg>
<div class="fld" style="left:1083px;top:972px;width:68px;height:20px;line-height:18px;">0</div>
<div class="a" style="left:0;top:997px;width:1280px;height:3px;background:#7f9cbf"></div>
</body></html>
